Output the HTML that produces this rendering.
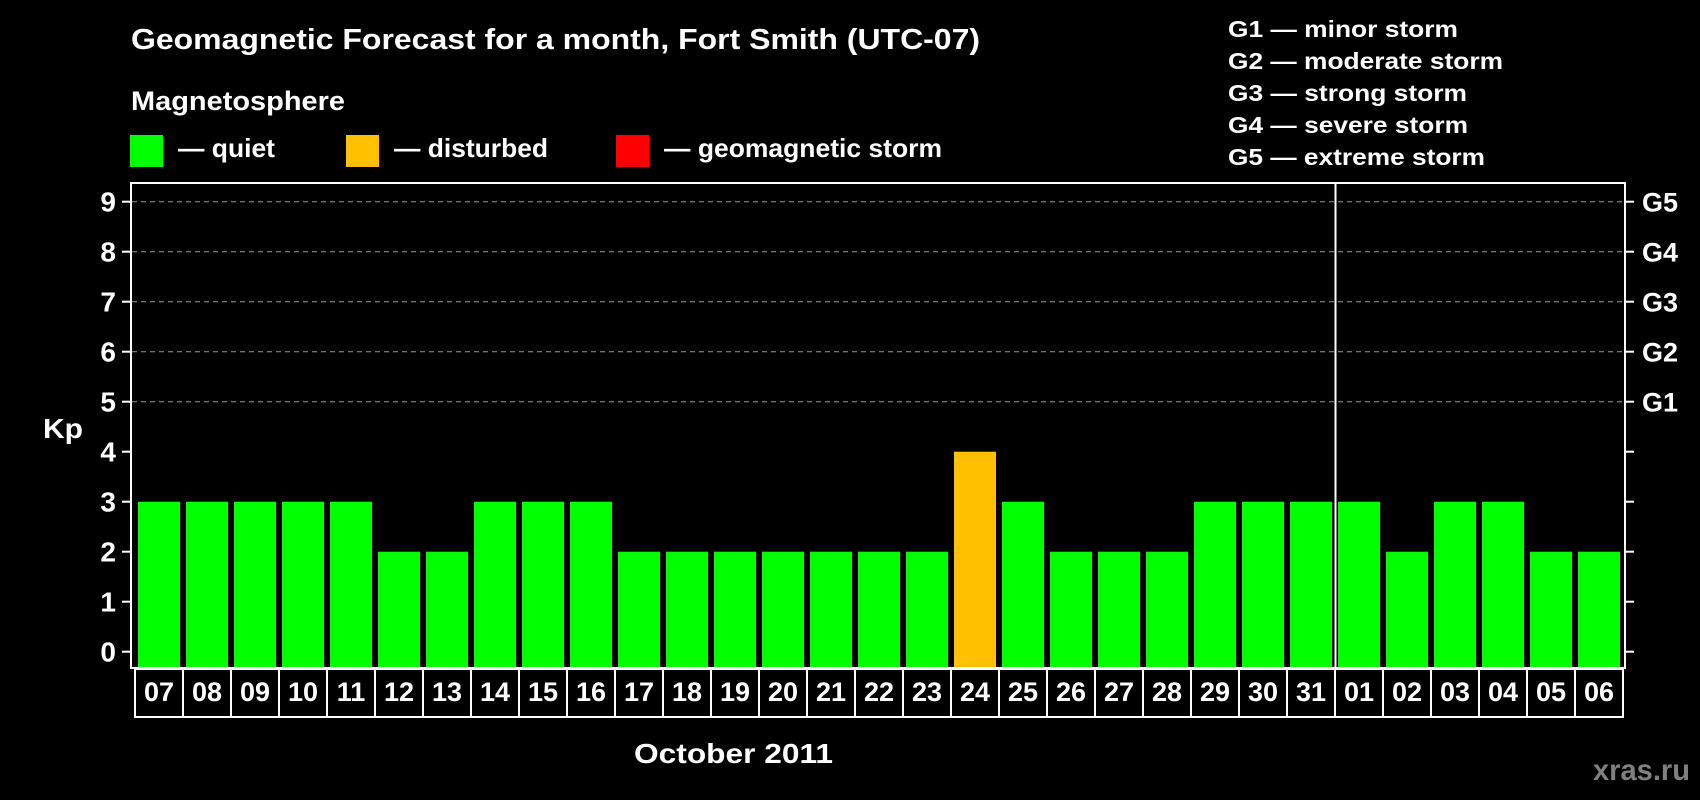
<!DOCTYPE html>
<html><head><meta charset="utf-8"><style>
html,body{margin:0;padding:0;background:#000;}
svg{display:block;}
text{font-family:"Liberation Sans",Arial,sans-serif;font-weight:bold;fill:#fff;}
</style></head><body>
<svg width="1700" height="800" viewBox="0 0 1700 800" xmlns="http://www.w3.org/2000/svg">
<rect width="1700" height="800" fill="#000"/>
<text x="131" y="49" font-size="29" textLength="849" lengthAdjust="spacingAndGlyphs">Geomagnetic Forecast for a month, Fort Smith (UTC-07)</text>
<text x="131" y="110" font-size="27" textLength="214" lengthAdjust="spacingAndGlyphs">Magnetosphere</text>
<rect x="130" y="135" width="33" height="32" fill="#00ff00"/>
<text x="178" y="157" font-size="26" textLength="97" lengthAdjust="spacingAndGlyphs">— quiet</text>
<rect x="346" y="135" width="33" height="32" fill="#ffc000"/>
<text x="394" y="157" font-size="26" textLength="154" lengthAdjust="spacingAndGlyphs">— disturbed</text>
<rect x="616" y="135" width="33" height="32" fill="#ff0000"/>
<text x="664" y="157" font-size="26" textLength="278" lengthAdjust="spacingAndGlyphs">— geomagnetic storm</text>
<g font-size="23">
<text x="1228" y="37" textLength="230" lengthAdjust="spacingAndGlyphs">G1 — minor storm</text>
<text x="1228" y="69" textLength="275" lengthAdjust="spacingAndGlyphs">G2 — moderate storm</text>
<text x="1228" y="101" textLength="239" lengthAdjust="spacingAndGlyphs">G3 — strong storm</text>
<text x="1228" y="133" textLength="240" lengthAdjust="spacingAndGlyphs">G4 — severe storm</text>
<text x="1228" y="165" textLength="257" lengthAdjust="spacingAndGlyphs">G5 — extreme storm</text>
</g>
<g stroke="#999" stroke-width="1" stroke-dasharray="5,4">
<line x1="132" y1="201.7" x2="1624" y2="201.7"/>
<line x1="132" y1="251.7" x2="1624" y2="251.7"/>
<line x1="132" y1="301.7" x2="1624" y2="301.7"/>
<line x1="132" y1="351.7" x2="1624" y2="351.7"/>
<line x1="132" y1="401.7" x2="1624" y2="401.7"/>
</g>
<g id="bars"></g>
<g stroke="#fff" stroke-width="2" fill="none">
<rect x="131" y="183" width="1494" height="485"/>
<line x1="1335.5" y1="183" x2="1335.5" y2="668"/>
</g>
<g id="ticks" stroke="#fff" stroke-width="2"></g>
<g id="ylab" font-size="28" text-anchor="end"></g>
<g id="glab" font-size="27"></g>
<text x="43" y="438" font-size="28" textLength="40" lengthAdjust="spacingAndGlyphs">Kp</text>
<g id="cells"></g>
<text x="634" y="763" font-size="28" textLength="199" lengthAdjust="spacingAndGlyphs">October 2011</text>
<text x="1593" y="780" font-size="30" textLength="97" lengthAdjust="spacingAndGlyphs" style="fill:#808080">xras.ru</text>
<script>
(function(){
var ns="http://www.w3.org/2000/svg";
function el(p,t,a,txt){var e=document.createElementNS(ns,t);for(var k in a)e.setAttribute(k,a[k]);if(txt!==undefined)e.textContent=txt;document.getElementById(p).appendChild(e);}
var days=["07","08","09","10","11","12","13","14","15","16","17","18","19","20","21","22","23","24","25","26","27","28","29","30","31","01","02","03","04","05","06"];
var v=[3,3,3,3,3,2,2,3,3,3,2,2,2,2,2,2,2,4,3,2,2,2,3,3,3,3,2,3,3,2,2];
var z=651.7;
for(var i=0;i<31;i++){var cx=135+i*48;var ty=z-v[i]*50;
el("bars","rect",{x:cx+3,y:ty,width:42,height:668-ty,fill:v[i]>=4?"#ffc000":"#00ff00"});
el("cells","rect",{x:cx,y:669,width:48,height:48,fill:"none",stroke:"#fff","stroke-width":2});
el("cells","text",{x:cx+24,y:701,"font-size":27,"text-anchor":"middle"},days[i]);}
for(var k=0;k<=9;k++){var y=z-k*50;
el("ticks","line",{x1:122,y1:y,x2:131,y2:y});
el("ticks","line",{x1:1625,y1:y,x2:1634,y2:y});
el("ylab","text",{x:116,y:y+10},String(k));
if(k>=5)el("glab","text",{x:1642,y:y+10},"G"+(k-4));}
})();
</script>
</svg>
</body></html>
